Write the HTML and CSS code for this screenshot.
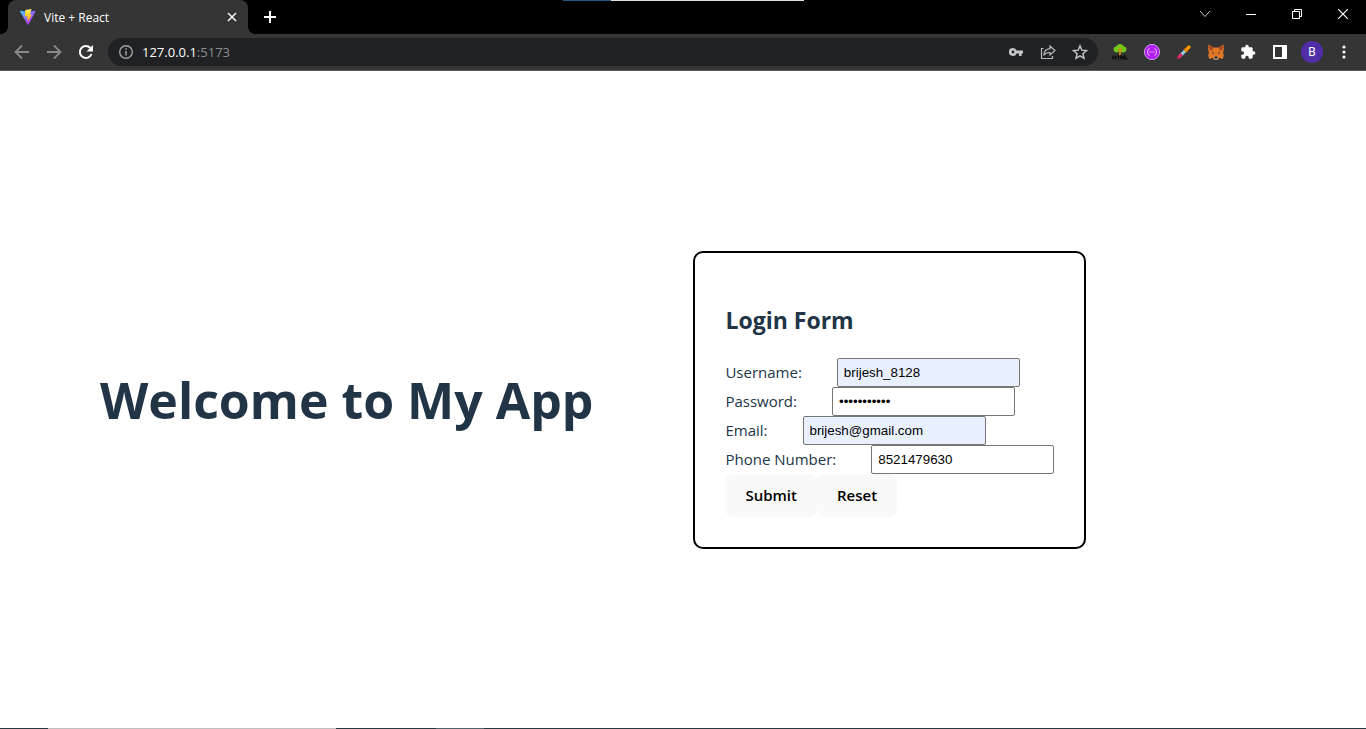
FILE: index.html
```html
<!DOCTYPE html>
<html lang="en">
<head>
<meta charset="utf-8">
<meta name="viewport" content="width=device-width, initial-scale=1">
<title>Vite + React</title>
<link rel="stylesheet" href="styles.css">
</head>
<body>
<header class="browser">
  <div class="tab-strip">
    <div class="edge-window"></div>
    <div class="tab">
      <svg class="favicon" width="16" height="16" viewBox="0 0 32 32" aria-hidden="true">
        <defs>
          <linearGradient id="vg" x1="0" y1="0" x2="1" y2="1"><stop offset="0" stop-color="#41d1ff"/><stop offset=".75" stop-color="#bd34fe"/></linearGradient>
          <linearGradient id="vb" x1="0" y1="0" x2="0" y2="1"><stop offset="0" stop-color="#ffea83"/><stop offset=".3" stop-color="#ffdd35"/><stop offset="1" stop-color="#ff9800"/></linearGradient>
        </defs>
        <path fill="url(#vg)" d="M31 5 17 31.200q-1 1-2 0L0 5q0-1.500 1.600-1.500L16 6l13.500-2.500Q31.500 3.500 31 5z"/>
        <path fill="url(#vb)" d="M23 0 10.500 2 10 15l5-1-1.500 6 3-.7L15 27l9-16-4.500 1z"/>
      </svg>
      <span class="tab-title">Vite + React</span>
      <button class="tab-close" aria-label="Close tab"><svg width="10" height="10" viewBox="0 0 10 10"><path d="M1 1l8 8M9 1l-8 8" stroke="#f1f1f1" stroke-width="1.600"/></svg></button>
    </div>
    <button class="new-tab" aria-label="New tab"><svg width="12" height="12" viewBox="0 0 12 12"><path d="M6 0v12M0 6h12" stroke="#fff" stroke-width="2"/></svg></button>
    <div class="window-controls">
      <button aria-label="Search tabs"><svg width="12" height="8" viewBox="0 0 12 8"><path d="M1 1l5 5.500L11 1" fill="none" stroke="#ccc"/></svg></button>
      <button aria-label="Minimize"><svg width="10" height="10" viewBox="0 0 10 10"><path d="M0 5.500h10" stroke="#fff"/></svg></button>
      <button aria-label="Restore"><svg width="10" height="10" viewBox="0 0 10 10"><path d="M.5 2.500h7v7h-7zM2.500 2.500v-2h7v7h-2" fill="none" stroke="#fff"/></svg></button>
      <button aria-label="Close window"><svg width="10" height="10" viewBox="0 0 10 10"><path d="M0 0l10 10M10 0L0 10" stroke="#fff" stroke-width="1.200"/></svg></button>
    </div>
  </div>
  <div class="toolbar">
    <nav class="icon-group">
      <button aria-label="Back"><svg width="16" height="16" viewBox="0 0 16 16"><path d="M15 8H2M8 1.500L1.500 8 8 14.500" fill="none" stroke="#8a8a8a" stroke-width="1.800"/></svg></button>
      <button aria-label="Forward"><svg width="16" height="16" viewBox="0 0 16 16"><path d="M1 8h13M8 1.500L14.500 8 8 14.500" fill="none" stroke="#8a8a8a" stroke-width="1.800"/></svg></button>
      <button aria-label="Reload"><svg width="16" height="16" viewBox="0 0 16 16"><path d="M13.500 10A6 6 0 1 1 12.200 3.800L13.500 5" fill="none" stroke="#fff" stroke-width="2"/><path d="M15 1v6.500H8.500z" fill="#fff"/></svg></button>
    </nav>
    <div class="address">
      <button aria-label="Site information"><svg width="14" height="14" viewBox="0 0 14 14"><circle cx="7" cy="7" r="6.300" fill="none" stroke="#a0a3a6" stroke-width="1.400"/><path d="M7 6v4.500M7 3.300v1.500" stroke="#a0a3a6" stroke-width="1.500"/></svg></button>
      <span class="url">127.0.0.1<span class="port">:5173</span></span>
      <button aria-label="Saved passwords"><svg width="14" height="10" viewBox="0 0 14 10"><path fill="#c6c7c8" fill-rule="evenodd" d="M4 1a4 4 0 1 0 3.600 5.400H10V9h2.600V6.400H14V3.600H7.600A4 4 0 0 0 4 1zm0 2.600a1.400 1.400 0 1 1 0 2.800 1.400 1.400 0 0 1 0-2.800z"/></svg></button>
      <button aria-label="Share"><svg width="16" height="16" viewBox="0 0 16 16" fill="none" stroke="#b8babc" stroke-width="1.200"><path d="M3.500 4.500H1.500v10h11V12"/><path d="M10 2l5 4.500-5 4.500V8.500C7 8.500 5 9.500 3.700 11.500 4 7.500 6.500 5 10 4.700z"/></svg></button>
      <button aria-label="Bookmark this page"><svg width="16" height="16" viewBox="0 0 16 16"><path d="M8 1.800l1.800 4.400 4.700.4-3.600 3.100 1.100 4.600L8 11.800l-4 2.500 1.100-4.600-3.600-3.100 4.700-.4z" fill="none" stroke="#c6c7c8" stroke-width="1.400"/></svg></button>
    </div>
    <div class="icon-group">
      <button aria-label="HTML tree"><svg width="16" height="16" viewBox="0 0 16 16"><path d="M7 7h2v5H7z" fill="#b06b20"/><path d="M8 0c2 0 3 1 3.300 2.200C13 2.200 14.500 3.500 14.500 5c0 2-1.500 3.500-3.500 3.500-1 0-1.500-.4-2-1L8 8.500l-1-1c-.5.6-1.200 1-2 1-2 0-3.500-1.500-3.500-3.500 0-1.500 1.500-2.600 3.200-2.800C5 1 6 0 8 0z" fill="#6fc81a"/><path d="M8 3v9M8 7l2-2M8 7L6 5.500" stroke="#d08c1c" stroke-width="1.300"/><path d="M1 11.500v4M3.500 11.500v4M1 13.500h2.500M4.500 12h4M6.500 12v3.500M9 15.500v-3.500l1.500 2 1.500-2v3.500M13.500 11.500V15H16" fill="none" stroke="#0b0505" stroke-width="1.200"/></svg></button>
      <button aria-label="JSON viewer"><svg width="16" height="16" viewBox="0 0 16 16"><circle cx="8" cy="8" r="7.600" fill="#b01df0" stroke="#e3b8f7" stroke-width=".8"/><path d="M5.500 4.500c-2 0-1 3-2.500 3.500 1.500.5.500 3.500 2.500 3.500M10.500 4.500c2 0 1 3 2.500 3.500-1.500.5-.5 3.500-2.500 3.500" fill="none" stroke="#f2d9ff" stroke-width=".9"/><path d="M5.500 8h5" stroke="#fff" stroke-width="1.200" stroke-dasharray="1 1"/></svg></button>
      <button aria-label="Color picker"><svg width="14" height="14" viewBox="0 0 14 14"><path d="M2.500 11.500L9 5" stroke="#9bd5f5" stroke-width="3"/><path d="M1.500 12.500L4 10" stroke="#e91e63" stroke-width="2.600" stroke-linecap="round"/><path d="M9 5L12 2" stroke="#ff9800" stroke-width="3.200" stroke-linecap="round"/><path d="M7 4l3 3" stroke="#e67b00" stroke-width="1.500"/></svg></button>
      <button aria-label="Fox wallet"><svg width="16" height="16" viewBox="0 0 16 16"><path d="M.5.500l5 3h5l5-3L16 6l-1 2 .8 3.500-1 3.500-3.500-1-1.500 1.500H6.200L4.700 14l-3.500 1-1-3.500L1 8 0 6z" fill="#e27625"/><path d="M.5.500l5 3L4 7 1 6zM15.500.5l-5 3L12 7l3-1z" fill="#a95123"/><path d="M3.500 9l2.500.8-.5-1.800zM12.500 9l-2.500.8.500-1.800z" fill="#4b3028"/><path d="M5.500 14L6.500 12.500h3l1 1.500-1 1.500h-3z" fill="#d7c1b3"/><path d="M6.300 13.200L7 12.500h2l.7.700-.2 1.300h-3z" fill="#161616"/></svg></button>
      <button aria-label="Extensions"><svg width="16" height="16" viewBox="0 0 24 24"><path fill="#fff" d="M20.500 11H19V7c0-1.100-.9-2-2-2h-4V3.500a2.500 2.500 0 0 0-5 0V5H4c-1.100 0-2 .9-2 2v3.800h1.500a2.700 2.700 0 0 1 0 5.400H2V20c0 1.100.9 2 2 2h3.800v-1.500a2.700 2.700 0 0 1 5.400 0V22H17c1.100 0 2-.9 2-2v-4h1.500a2.500 2.500 0 0 0 0-5z"/></svg></button>
      <button aria-label="Side panel"><svg width="14" height="14" viewBox="0 0 14 14"><path d="M1 1h12v12H1z" fill="none" stroke="#fff" stroke-width="2"/><path d="M9 1h4v12H9z" fill="#fff"/></svg></button>
      <button aria-label="Profile"><span class="avatar">B</span></button>
      <button aria-label="Menu"><svg width="4" height="14" viewBox="0 0 4 14" fill="#fff"><circle cx="2" cy="2" r="1.600"/><circle cx="2" cy="7" r="1.600"/><circle cx="2" cy="12" r="1.600"/></svg></button>
    </div>
  </div>
</header>
<main class="page">
  <h1 class="welcome">Welcome to My App</h1>
  <form class="card">
    <h2 class="card-title">Login Form</h2>
    <div class="field"><label for="username">Username:</label><input class="filled" id="username" type="text" value="brijesh_8128"></div>
    <div class="field"><label for="password">Password:</label><input id="password" type="password" value="secret12345"></div>
    <div class="field"><label for="email">Email:</label><input class="filled" id="email" type="email" value="brijesh@gmail.com"></div>
    <div class="field"><label for="phone">Phone Number:</label><input id="phone" type="tel" value="8521479630"></div>
    <div class="actions"><button type="submit">Submit</button><button type="reset">Reset</button></div>
  </form>
</main>
<footer class="taskbar"><span class="task-search"></span><span class="task-active"></span></footer>
</body>
</html>
```
FILE: styles.css
```css
* {
  box-sizing: border-box;
}

body {
  margin: 0;
  min-height: 100vh;
  display: flex;
  flex-direction: column;
  background: #fff;
  color: #213547;
  font-family: "Open Sans", "Noto Sans", sans-serif;
}

button {
  border: 0;
  padding: 0;
  background: none;
  color: inherit;
  font-family: inherit;
}

svg {
  display: block;
}

.browser {
  border-bottom: 1px solid #5a5a5a;
  background: #353535;
}

.tab-strip {
  position: relative;
  display: flex;
  height: 34px;
  padding-left: 8px;
  background: #000;
}

.edge-window {
  position: absolute;
  top: 0;
  left: 563px;
  width: 241px;
  height: 1px;
  background: linear-gradient(to right, #1f5a82 48px, #e0e0e0 48px);
}

.tab {
  position: relative;
  display: flex;
  align-items: center;
  width: 240px;
  padding: 0 8px 0 12px;
  border-radius: 8px 8px 0 0;
  background: #353535;
  color: #fff;
}

.tab::before,
.tab::after {
  content: "";
  position: absolute;
  bottom: 0;
  width: 8px;
  height: 8px;
}

.tab::before {
  right: 100%;
  background: radial-gradient(circle at 0 0, #000 8px, #353535 8px);
}

.tab::after {
  left: 100%;
  background: radial-gradient(circle at 100% 0, #000 8px, #353535 8px);
}

.tab-title {
  flex: 1;
  padding-left: 8px;
  font-size: 12px;
}

.tab-close {
  display: grid;
  place-items: center;
  width: 16px;
  height: 16px;
}

.new-tab {
  display: grid;
  place-items: center;
  width: 28px;
  margin-left: 8px;
}

.window-controls {
  display: flex;
  height: 28px;
  margin-left: auto;
}

.window-controls button {
  display: grid;
  place-items: center;
  width: 46px;
}

.toolbar {
  display: flex;
  align-items: center;
  gap: 6px;
  height: 36px;
  padding: 0 6px;
}

.icon-group {
  display: flex;
}

.icon-group button,
.address button {
  display: grid;
  place-items: center;
  width: 32px;
  height: 28px;
}

.address {
  flex: 1;
  display: flex;
  align-items: center;
  padding: 0 2px;
  border-radius: 14px;
  background: #202124;
}

.url {
  flex: 1;
  color: #fff;
  font-size: 13px;
}

.port {
  color: #8b8e91;
}

.avatar {
  width: 22px;
  border-radius: 50%;
  background: #512da8;
  color: #fff;
  font: 12px/22px Roboto, sans-serif;
}

.page {
  flex: 1;
  display: flex;
  align-items: center;
  gap: 100px;
  padding: 0 100px;
}

.welcome {
  margin: 0;
  font-size: 50px;
  line-height: 56px;
  white-space: nowrap;
}

.card {
  padding: 30px;
  border: 2px solid #000;
  border-radius: 10px;
}

.card-title {
  margin: 20px 0;
  font-size: 23px;
  line-height: 35px;
}

.field {
  display: flex;
  align-items: center;
  gap: 35px;
  font-size: 15px;
}

.field input {
  width: 183px;
  height: 29px;
  padding: 0 6px;
  border: 1px solid #767676;
  border-radius: 2px;
  background: #fff;
  color: #000;
  font-family: "Liberation Sans", Arial, sans-serif;
}

.field .filled {
  background: #e8f0fe;
}

.actions {
  display: flex;
}

.actions button {
  height: 43px;
  padding: 0 20px;
  border-radius: 8px;
  background: #f9f9f9;
  color: #000;
  font-size: 15px;
  font-weight: 600;
}

.taskbar {
  display: flex;
  gap: 100px;
  height: 1px;
  padding-left: 48px;
  background: #263740;
}

.task-search {
  width: 288px;
  background: #c0c0c0;
}

.task-active {
  width: 48px;
  background: #53616a;
}
```
